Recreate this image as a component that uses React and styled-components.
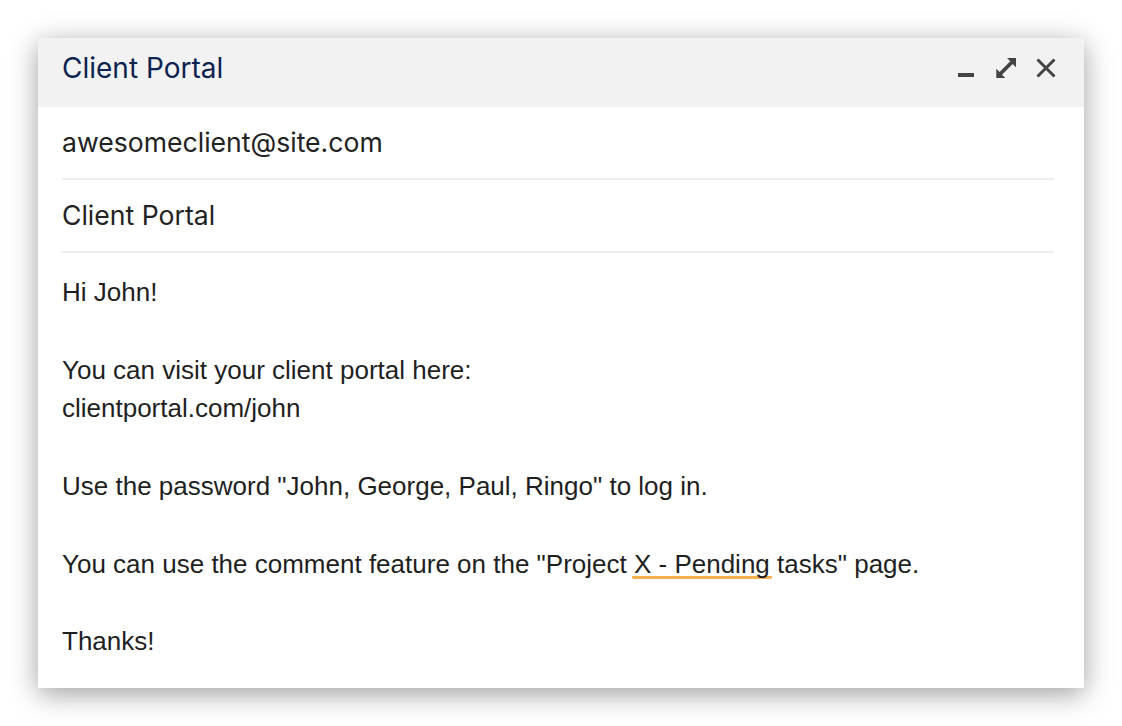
import React from "react";
import styled, { createGlobalStyle } from "styled-components";

const Global = createGlobalStyle`
  html, body { margin: 0; padding: 0; background: #ffffff; }
  body { font-family: "Liberation Sans", Arial, sans-serif; }
  * { box-sizing: border-box; }
`;

const Page = styled.div`
  padding: 38px;
  width: 1122px;
`;

const Window = styled.div`
  width: 1046px;
  height: 650px;
  background: #ffffff;
  box-shadow: 0 6px 26px rgba(0, 0, 0, 0.38);
  display: flex;
  flex-direction: column;
  overflow: hidden;
`;

const Header = styled.div`
  height: 69px;
  background: #f2f2f2;
  display: flex;
  align-items: center;
  justify-content: space-between;
  padding: 0 27px 10px 24px;
  flex-shrink: 0;
`;

const Title = styled.div`
  font-family: Inter, "Open Sans", sans-serif;
  font-size: 28px;
  color: #0d2350;
  letter-spacing: 0px;
`;

const Controls = styled.div`
  display: flex;
  align-items: center;
  gap: 18px;
`;

const IconButton = styled.button`
  border: none;
  background: none;
  padding: 0;
  width: 22px;
  height: 22px;
  display: flex;
  align-items: center;
  justify-content: center;
  color: #444444;
  cursor: pointer;
`;

const Content = styled.div`
  padding: 0 30px 0 24px;
  display: flex;
  flex-direction: column;
`;

const Field = styled.div`
  height: 73px;
  display: flex;
  align-items: center;
  padding-bottom: 2px;
  border-bottom: 2px solid #eceff2;
  font-family: Inter, "Open Sans", sans-serif;
  font-size: 26.6px;
  color: #222222;
`;

const Body = styled.div`
  padding-top: 20px;
  font-family: "Liberation Sans", Arial, sans-serif;
  font-size: 26px;
  line-height: 38.8px;
  color: #1f1f1f;
`;

const Para = styled.p`
  margin: 0 0 38.8px 0;
`;

const Mark = styled.span`
  padding: 0 2px 0.5px;
  margin: 0 -2px;
  border-radius: 2px;
  background: linear-gradient(#f5b04f, #f5b04f) no-repeat left bottom / 100% 3px;
`;

const MinimizeIcon = () => (
  <svg width="22" height="22" viewBox="0 0 22 22">
    <rect x="3" y="16" width="16" height="4" fill="currentColor" />
  </svg>
);

const ExpandIcon = () => (
  <svg width="22" height="22" viewBox="0 0 22 22">
    <path
      d="M21 1h-9l3.3 3.3L4.6 15 1.3 11.7V21h9l-3.3-3.3L17.7 7 21 10.3z"
      fill="currentColor"
    />
  </svg>
);

const CloseIcon = () => (
  <svg width="22" height="22" viewBox="0 0 22 22">
    <path d="M2.5 2.5l17 17M19.5 2.5l-17 17" stroke="currentColor" strokeWidth="3" />
  </svg>
);

export default function App() {
  return (
    <>
      <Global />
      <Page>
        <Window>
          <Header>
            <Title>Client Portal</Title>
            <Controls>
              <IconButton aria-label="Minimize">
                <MinimizeIcon />
              </IconButton>
              <IconButton aria-label="Expand">
                <ExpandIcon />
              </IconButton>
              <IconButton aria-label="Close">
                <CloseIcon />
              </IconButton>
            </Controls>
          </Header>
          <Content>
            <Field>awesomeclient@site.com</Field>
            <Field>Client Portal</Field>
            <Body>
              <Para>Hi John!</Para>
              <Para>
                You can visit your client portal here:
                <br />
                clientportal.com/john
              </Para>
              <Para>Use the password "John, George, Paul, Ringo" to log in.</Para>
              <Para>
                You can use the comment feature on the "Project <Mark>X - Pending</Mark> tasks" page.
              </Para>
              <Para>Thanks!</Para>
            </Body>
          </Content>
        </Window>
      </Page>
    </>
  );
}
